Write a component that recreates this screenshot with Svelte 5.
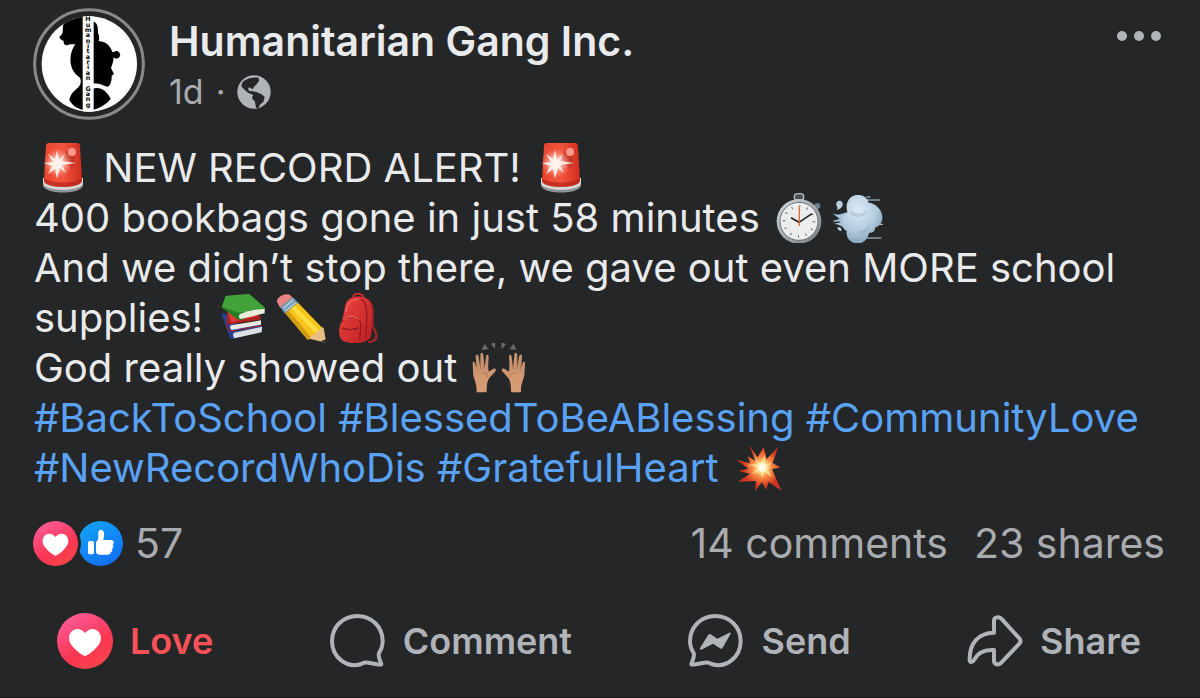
<script lang="ts">
  const pageName = 'Humanitarian Gang Inc.'
  const avatarLetters = 'Humanitarian Gang'.split('')

  let loved = $state(true)
</script>

{#snippet heart()}
  <svg class="glyph" viewBox="0 0 56 56" aria-hidden="true">
    <path fill="#fff" d="M28 43c-2 0-7-4-10-7-4-4-6-7-6-11 0-5 4-9 8-9s6 2 8 4c2-2 4-4 8-4s8 4 8 9c0 4-2 7-6 11-3 3-8 7-10 7z" />
  </svg>
{/snippet}

{#snippet siren()}
  <svg class="emoji" viewBox="0 0 58 50" role="img" aria-label="Siren">
    <path fill="#8f9496" d="M9 36h40v6c0 10-40 10-40 0z" />
    <path fill="#d8dad7" d="M9 35h40v5c0 9-40 9-40 0z" />
    <path fill="url(#siren-red)" d="M15 0h28q3 0 3 3l2 34c0 9-38 9-38 0l2-34q0-3 3-3z" />
    <path fill="#b52419" opacity=".7" d="M10 35c8 6 30 6 38 0v3c0 8-38 8-38 0z" />
    <path fill="#a92b22" opacity=".55" d="M32 8q8 1 9 10l-3 8-8-8z" />
    <circle cx="38" cy="9" r="4" fill="#ff9b8e" />
    <circle cx="24" cy="20" r="15" fill="url(#siren-glow)" />
    <path fill="#fff4ee" opacity=".9" d="m23 7 2 10 6-6-3 7 14 2-14 2 4 8-6-5-3 11-2-10-7 5 4-8-8-3 9-1-5-8 7 5z" />
  </svg>
{/snippet}

<svg class="defs" width="0" height="0" aria-hidden="true">
  <defs>
    <linearGradient id="siren-red" x1="0" x2="1">
      <stop offset="0" stop-color="#e8452f" />
      <stop offset=".5" stop-color="#f2553d" />
      <stop offset="1" stop-color="#d02c1e" />
    </linearGradient>
    <radialGradient id="siren-glow">
      <stop offset="0" stop-color="#fff" />
      <stop offset=".3" stop-color="#ffd9d0" stop-opacity=".9" />
      <stop offset="1" stop-color="#ff8a78" stop-opacity="0" />
    </radialGradient>
    <linearGradient id="steel" x1="0" y1="0" x2="1" y2="1">
      <stop offset="0" stop-color="#d5dade" />
      <stop offset="1" stop-color="#747d84" />
    </linearGradient>
    <radialGradient id="puff" cx=".4" cy=".3" r=".75">
      <stop offset="0" stop-color="#dcebf6" />
      <stop offset=".6" stop-color="#b2cbdd" />
      <stop offset="1" stop-color="#809db5" />
    </radialGradient>
    <linearGradient id="bag" x1="0" y1="0" x2="1" y2="1">
      <stop offset="0" stop-color="#ee4640" />
      <stop offset="1" stop-color="#bd1f23" />
    </linearGradient>
    <linearGradient id="skin" x1="0" y1="0" x2="0" y2="1">
      <stop offset="0" stop-color="#c58f6d" />
      <stop offset="1" stop-color="#d79c72" />
    </linearGradient>
    <radialGradient id="blast" cx="122" cy="82" r="65" gradientUnits="userSpaceOnUse">
      <stop offset="0" stop-color="#fff" />
      <stop offset=".2" stop-color="#ffe58a" />
      <stop offset=".45" stop-color="#fa8b42" />
      <stop offset=".9" stop-color="#cf3420" />
    </radialGradient>
  </defs>
</svg>

<article class="post">
  <header class="post-header">
    <a class="avatar" href="#profile" aria-label={pageName}>
      <svg viewBox="39 24 336 336" aria-hidden="true">
        <clipPath id="avatar-clip"><circle cx="208" cy="192" r="143" /></clipPath>
        <circle cx="207" cy="192" r="163" fill="none" stroke="#88898b" stroke-width="9" />
        <g clip-path="url(#avatar-clip)">
          <rect x="60" y="40" width="300" height="300" fill="#fff" />
          <path d="M190 45c-30 0-58 12-61 34-2 15 3 21-11 32 2 8 10 10 13 12-1 8 4 15 12 12 7-4 13-2 23-2-14 18-18 45-12 66 5 18 17 28 26 34 6 15 0 25-10 33-12 10-18 17-22 34 8 16 24 26 42 30z" />
          <path d="M218 64c16 5 16 20 16 34 4 10 5 17 2 25 22 2 35 14 41 33h5a11 11 0 1 1-1 16c0 14-6 25-8 32l9 18-7 5c1 16-5 33-14 33-9-1-15-10-43-10zM218 266c25-7 43 8 54 31-16 19-35 28-54 33z" />
          <rect x="188" y="40" width="33" height="300" fill="#fff" />
          <g class="avatar-text">
            {#each avatarLetters as letter, i}
              <text x="204" y={64 + i * 16}>{letter}</text>
            {/each}
          </g>
        </g>
      </svg>
    </a>
    <div class="byline">
      <h1><a href="#profile">{pageName}</a></h1>
      <div class="meta">
        <a href="#post">1d</a>
        <span>·</span>
        <svg class="globe" viewBox="648 225 102 102" role="img" aria-label="Public">
          <circle cx="699" cy="276" r="50" fill="#b0b3b8" />
          <path fill="#252628" d="M668 243c14-10 30-12 45-10l1 9-7 11-8 7-4 8-10-6-4 5 4 6 12 1 9 2 16 7 9 8-4 15-9 7-6 12-7-2-3-18-9-11 3-9-15-7-12-10-7-8c-1-7 2-13 6-17z" />
        </svg>
      </div>
    </div>
    <button class="more" aria-label="More options">
      <svg viewBox="0 0 44 12" aria-hidden="true">
        <circle cx="5" cy="6" r="5" />
        <circle cx="22" cy="6" r="5" />
        <circle cx="39" cy="6" r="5" />
      </svg>
    </button>
  </header>

  <div class="post-text">
    <p>{@render siren()} NEW RECORD ALERT! {@render siren()}</p>
    <p>
      400 bookbags gone in just 58 minutes
      <span class="emojis">
        <svg class="emoji" viewBox="32 33 174 150" role="img" aria-label="Stopwatch">
          <rect x="108" y="48" width="14" height="20" fill="#8e979e" />
          <rect x="102" y="35" width="28" height="20" rx="9" fill="#4b5054" stroke="#b9c0c5" stroke-width="4" />
          <circle cx="171" cy="72" r="9" fill="#6c7d8c" />
          <circle cx="116" cy="118" r="67" fill="url(#steel)" />
          <circle cx="116" cy="118" r="57" fill="#eceded" stroke="#697077" stroke-width="3" />
          <circle cx="116" cy="118" r="45" fill="none" stroke="#777" stroke-width="8" stroke-dasharray="3 20.5" />
          <path d="m92 107 24 14 39-26" fill="none" stroke="#222" stroke-width="5" />
          <path d="M117 72v60" stroke="#e46a3c" stroke-width="4" />
        </svg><svg class="emoji" viewBox="206 33 174 150" role="img" aria-label="Dash">
          <path stroke="#c5d7e3" stroke-width="3" d="M318 45h12M310 54h50M350 127h18M315 168h48" />
          <path fill="#a9c4d8" d="M216 94c22 10 28-3 54-4v46c-25 7-32-14-54-9l26-7c-8-4-17 2-26-3l22-6-10-8z" />
          <path fill="#b7d0e1" d="M229 84c4-4 2-9-1-14-2-9 5-15 13-13 11 4 8 23-12 27zM230 137c9-3 15 2 13 9-4 3-9-2-13-9z" />
          <path fill="url(#puff)" d="M262 92c-9-23 2-47 22-52 20-5 36 4 41 22 26 3 43 26 41 48-2 16-10 22-22 27 1 11-6 16-18 16-4 20-18 32-33 31-23 1-37-18-34-37-20-9-21-42 3-55z" />
          <path fill="#7998af" opacity=".3" d="M272 85c12 14 33 12 49 1-7 19-36 24-49 13zM292 148c15-1 28-8 35-22 3 15-11 27-26 29z" />
        </svg></span>
    </p>
    <p>
      And we didn’t stop there, we gave out even MORE school supplies!
      <span class="emojis">
        <svg class="emoji" viewBox="15 20 174 150" role="img" aria-label="Books">
          <path fill="#263f91" d="m37 82 12-2 17 30 92 8 3 13-88 27q-9 1-12-8z" />
          <path fill="#dce0e4" d="m75 139 84-18-1 17-82 18q-7-10-1-17z" />
          <path fill="#ac2220" d="m54 77 98 10 4 12-91 15q-10 2-11-9z" />
          <path fill="#df3d31" d="m55 75 12 33 82-19-50-20z" />
          <path fill="#ebe7e2" d="m65 117 91-15v13l-88 16q-7-5-3-14z" />
          <path fill="#a32425" d="M53 95c0 30 4 36 15 38l90-17v3l-90 17c-15-1-19-12-15-41z" />
          <path fill="#277c28" d="m50 29 70-6 48 41v6l-72 32q-12-1-21-11L38 64z" />
          <path fill="#43a33b" d="m50 29 70-6 48 41-81 15-48-18z" />
          <path fill="#e9edda" d="M93 83q31-14 74-16v14l-72 17q-10-5-2-15z" />
        </svg><svg class="emoji" viewBox="189 20 174 150" role="img" aria-label="Pencil">
          <path fill="#e58482" d="M204 47c-3-15 23-28 38-22l10 10-38 31z" />
          <path fill="#6c94aa" d="m214 62 38-29 17 17-42 32z" />
          <path fill="#a9c9d7" d="m220 64 31-26 4 5-31 26zm6 8 34-26 3 4-33 26z" />
          <path fill="#f5c51c" d="m229 81 38-32 77 80-48 31z" />
          <path fill="#d49c13" d="m229 81 9-9 72 85-14 3z" />
          <path fill="#ffde41" d="m247 66 10-8 77 79-10 7z" />
          <path fill="#e7bd83" d="M302 157q4-15 15-11 1-14 15-12 0-12 12-10l8 46z" />
          <path fill="#292a2b" d="m351 159 2 12-18-6z" />
        </svg><svg class="emoji" viewBox="363 20 174 150" role="img" aria-label="Backpack">
          <path fill="none" stroke="#a32527" stroke-width="7" d="M470 39c31 11 17 57 21 81 12 22 23 42-14 48" />
          <path fill="none" stroke="#c6292a" stroke-width="6" d="M433 32c-1-14 28-14 31 4" />
          <path fill="url(#bag)" d="M407 68c2-28 20-39 47-37 23 1 32 17 34 36 0 35 2 71-4 89-18 17-57 18-82 8-15-8-14-45-4-57z" />
          <path fill="none" stroke="#901b20" stroke-width="4" d="M455 39c20 7 19 38 18 68l-3 48M396 110c8-26 55-24 60 4l-4 45M399 125c20 7 36 6 51-1" />
          <path fill="none" stroke="#ff746b" stroke-width="3" d="M411 77c3-28 19-39 37-37M403 101c9-13 34-15 46-1" />
        </svg></span>
    </p>
    <p>
      God really showed out
      <svg class="emoji" viewBox="30 29 174 150" role="img" aria-label="Raising hands">
        <path fill="#67696b" d="m67 50 10-18 12 16zM96 31l13-4-1 20zM127 27l14 5-13 16zM152 48l11-17 10 18z" />
        <g id="hand">
          <path fill="url(#skin)" d="M53 177c1-23-6-33-10-51l-2-35c-1-8 6-8 8 0l4 18-3-38c0-10 8-9 9 0l5 33V65c0-9 9-9 9 0l4 40 4-35c1-8 8-7 8 1l-2 34 1 10 14-8c7-4 12 2 6 8l-17 19c-6 8-8 20-8 43z" />
          <path fill="url(#skin)" d="M46 100h42v40H50z" />
          <path stroke="#9f6c50" stroke-width="2" fill="none" d="m53 96 2 12m9-14 1 12m10-12 1 12m-5 15c10-5 16 1 14 12" />
        </g>
        <use href="#hand" transform="matrix(-1 0 0 1 239 0)" />
      </svg>
    </p>
    <p>
      <a href="#BackToSchool">#BackToSchool</a>
      <a href="#BlessedToBeABlessing">#BlessedToBeABlessing</a>
      <a href="#CommunityLove">#CommunityLove</a>
      <a href="#NewRecordWhoDis">#NewRecordWhoDis</a>
      <a href="#GratefulHeart">#GratefulHeart</a>
      <svg class="emoji" viewBox="26 9 174 150" role="img" aria-label="Collision">
        <path fill="url(#blast)" d="m84 16 25 36 18-31 9 36 34-35-16 47 24 14-26 4 28 65-38-26-8 23-12-22-21 26 3-30-54 2 36-24-35-8 30-7-36-27 41 11-7-22 23 15z" />
        <path fill="#ffe5a0" opacity=".8" d="m98 52 19 21 13-27 3 29 18-9-14 19 16 28-22-18-9 20-6-23-24 10 19-20-33-7 31-4z" />
        <circle cx="122" cy="82" r="13" fill="#fff9df" />
      </svg>
    </p>
  </div>

  <div class="stats">
    <button class="reactions" aria-label="57 reactions">
      <span class="badge love">{@render heart()}</span>
      <span class="badge like">
        <svg class="glyph" viewBox="174 30 135 135" aria-hidden="true">
          <rect x="204" y="90" width="18" height="40" rx="5" fill="#fff" />
          <path fill="#fff" d="M228 93c8-6 7-14 7-27 0-14 16-12 17 1 1 8-1 13-2 20h22c10 0 12 10 6 14 4 5 2 10-2 12 3 6 0 9-4 11 1 5-4 7-10 7h-22c-7 0-12-3-12-9z" />
        </svg>
      </span>
      <span>57</span>
    </button>
    <div class="counts">
      <a href="#comments">14 comments</a>
      <a href="#shares">23 shares</a>
    </div>
  </div>

  <footer class="actions">
    <button class="action" class:loved aria-pressed={loved} onclick={() => loved = !loved}>
      <span class="badge love large">{@render heart()}</span>
      Love
    </button>
    <button class="action">
      <svg class="icon" viewBox="57 39 168 168" aria-hidden="true">
        <path d="M181 190q-21-6-30 2c-44 14-88-20-88-69 0-42 33-75 76-75s76 33 76 75c0 15-5 27-11 36-3 8 1 19 7 33 1 4-15 0-30-2z" />
      </svg>
      Comment
    </button>
    <button class="action">
      <svg class="icon" viewBox="57 39 168 168" aria-hidden="true">
        <path d="M97 190q21-6 30 2c44 14 88-20 88-69 0-42-33-75-76-75s-76 33-76 75c0 15 5 27 11 36 3 8-1 19-7 33-1 4 15 0 30-2z" />
        <path class="solid" d="m93 144 25-40q3-4 7-1l20 13 36-18q6-2 4 3l-24 42q-3 6-8 2l-21-14-35 18q-6 1-4-5z" />
      </svg>
      Send
    </button>
    <button class="action">
      <svg class="icon" viewBox="49 39 168 168" aria-hidden="true">
        <path d="M130 98V62c0-10 14-14 22-6l54 59q7 8 0 16l-54 57c-8 9-22 5-22-5v-33c-28-2-49 8-60 30-6 10-14 7-13-3 0-47 25-78 73-79z" />
      </svg>
      Share
    </button>
  </footer>
</article>

<style>
  :global(body) {
    margin: 0;
    background: #252628;
  }

  .post {
    box-sizing: border-box;
    padding: 8px 35px 28px 33px;
    border-bottom: 2px solid #151617;
    background: #252628;
    color: #e9eaec;
    font-family: Inter, 'Liberation Sans', sans-serif;
    font-size: 40px;
    line-height: 50px;
  }

  .defs {
    position: absolute;
  }

  a {
    color: inherit;
    text-decoration: none;
  }

  button {
    padding: 0;
    border: 0;
    background: none;
    color: inherit;
    font: inherit;
    cursor: pointer;
  }

  .post-header {
    display: flex;
    align-items: flex-start;
    gap: 24px;
  }

  .avatar, .avatar svg {
    display: block;
    width: 112px;
    height: 112px;
    flex-shrink: 0;
  }

  .avatar-text {
    font: bold 19px 'DejaVu Sans', sans-serif;
    text-anchor: middle;
  }

  .byline {
    flex: 1;
    padding-top: 8px;
  }

  h1 {
    margin: 0;
    font-size: 41px;
    line-height: 50px;
    font-weight: 600;
  }

  .meta {
    display: flex;
    align-items: center;
    gap: 12px;
    font-size: 34px;
    line-height: 52px;
    color: #a9abae;
  }

  .globe {
    width: 34px;
    height: 34px;
  }

  .more {
    display: flex;
    padding: 22px 4px;
  }
  .more svg {
    width: 44px;
    height: 12px;
    fill: #b0b3b8;
  }

  .post-text {
    padding: 23px 0 0 1px;
  }
  .post-text p {
    margin: 0;
  }
  .post-text a {
    color: #5aa2f5;
  }

  .emojis {
    white-space: nowrap;
  }

  .emoji {
    width: 58px;
    height: 50px;
    vertical-align: bottom;
  }

  .stats {
    display: flex;
    justify-content: space-between;
    align-items: center;
    padding-top: 25px;
    font-size: 41px;
    color: #a9abae;
  }

  .reactions {
    display: flex;
    align-items: center;
  }
  .reactions > :last-child {
    margin-left: 12px;
  }

  .badge {
    display: flex;
    width: 45px;
    height: 45px;
    border-radius: 50%;
  }
  .badge.love {
    position: relative;
    background: linear-gradient(150deg, #ff5f9e 5%, #fa3652 60%, #fb4b48);
    box-shadow: 0 0 0 3px #252628;
  }
  .badge.like {
    background: linear-gradient(150deg, #12a8f5, #1268f5);
  }
  .badge.large {
    width: 56px;
    height: 56px;
  }

  .glyph {
    width: 100%;
    height: 100%;
  }

  .counts {
    display: flex;
    gap: 26px;
  }

  .actions {
    display: flex;
    justify-content: space-between;
    padding: 45px 24px 0;
  }

  .action {
    display: flex;
    align-items: center;
    gap: 17px;
    font-size: 36px;
    font-weight: 600;
    color: #b0b3b8;
  }
  .action.loved {
    color: #fb5158;
  }

  .icon {
    width: 56px;
    height: 56px;
    fill: none;
    stroke: #b0b3b8;
    stroke-width: 12;
    stroke-linejoin: round;
  }
  .icon .solid {
    fill: #b0b3b8;
    stroke: none;
  }
</style>
